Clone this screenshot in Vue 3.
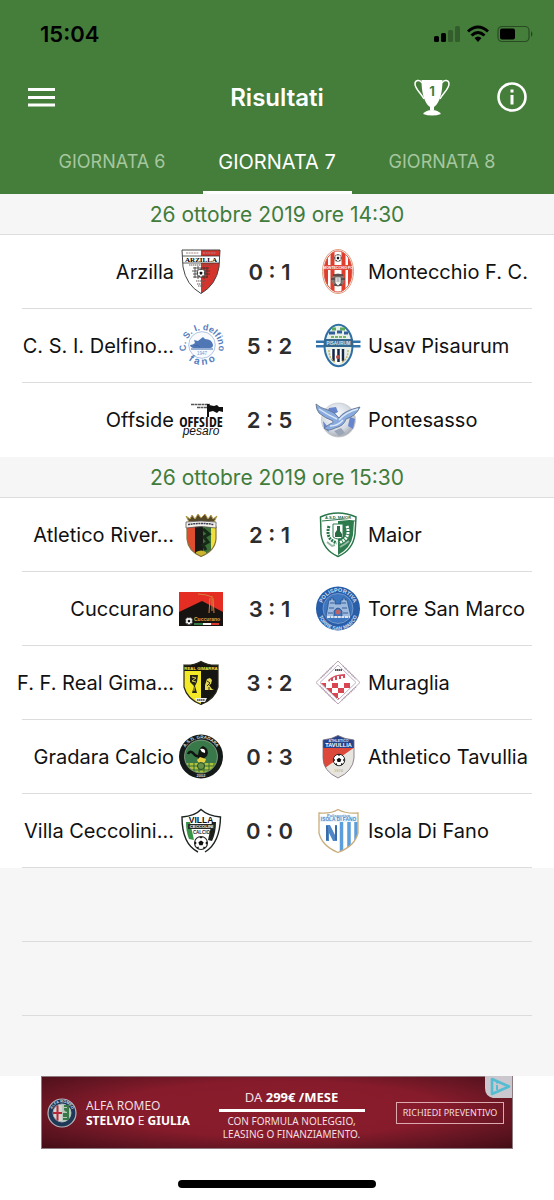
<script setup>
import { ref } from 'vue'

const days = [5, 6, 7, 8, 9]
const activeDay = ref(7)

const groups = [
  {
    date: '26 ottobre 2019 ore 14:30',
    matches: [
      { home: 'Arzilla', homeCrest: 'arzilla', score: '0 : 1', away: 'Montecchio F. C.', awayCrest: 'montecchio' },
      { home: 'C. S. I. Delfino...', homeCrest: 'delfino', score: '5 : 2', away: 'Usav Pisaurum', awayCrest: 'usav' },
      { home: 'Offside', homeCrest: 'offside', score: '2 : 5', away: 'Pontesasso', awayCrest: 'pontesasso' },
    ],
  },
  {
    date: '26 ottobre 2019 ore 15:30',
    matches: [
      { home: 'Atletico River...', homeCrest: 'atletico', score: '2 : 1', away: 'Maior', awayCrest: 'maior' },
      { home: 'Cuccurano', homeCrest: 'cuccurano', score: '3 : 1', away: 'Torre San Marco', awayCrest: 'torre' },
      { home: 'F. F. Real Gima...', homeCrest: 'gimarra', score: '3 : 2', away: 'Muraglia', awayCrest: 'muraglia' },
      { home: 'Gradara Calcio', homeCrest: 'gradara', score: '0 : 3', away: 'Athletico Tavullia', awayCrest: 'tavullia' },
      { home: 'Villa Ceccolini...', homeCrest: 'villa', score: '0 : 0', away: 'Isola Di Fano', awayCrest: 'isola' },
    ],
  },
]
</script>

<template>
  <svg class="sprites" aria-hidden="true">
    <defs>
      <clipPath id="shield-arzilla"><path d="M4 1H42L41 18Q38 36 23 44.500Q8 36 5 18Z" /></clipPath>
      <clipPath id="oval-montecchio"><ellipse cx="23" cy="22.500" rx="14" ry="20.500" /></clipPath>
      <clipPath id="shield-atletico"><path d="M9 15Q23 9 38 15V27Q37 39 23 44.500Q10 39 9 27Z" /></clipPath>
      <clipPath id="shield-gimarra"><path d="M6 5Q15 6 23 1.500Q31 6 40 5V27Q37 39 23 44.500Q9 39 6 27Z" /></clipPath>
      <clipPath id="diamond-muraglia"><path d="M23 5L41 22.500L23 40L5 22.500Z" /></clipPath>
      <clipPath id="disc-gradara"><circle cx="23" cy="22.500" r="16" /></clipPath>
      <clipPath id="shield-tavullia"><path d="M8 6Q17 5 23 1.500Q29 5 39 6V24Q38 37 23 44Q8 37 8 24Z" /></clipPath>
      <clipPath id="shield-isola"><path d="M4 5Q16 6 23 1.500Q31 6 43 5V25Q40 38 23 44.500Q7 38 4 25Z" /></clipPath>
      <radialGradient id="ball-shade" cx="42%" cy="38%" r="62%">
        <stop offset="0" stop-color="#fff" /><stop offset=".7" stop-color="#d4dae3" /><stop offset="1" stop-color="#a9adb5" />
      </radialGradient>
      <path id="arc-delfino-top" d="M8.500 28.500A16.500 16.500 0 1 1 40 28.500" />
      <path id="arc-delfino-bottom" d="M6 32A21.500 21.500 0 0 0 42 32" />
      <path id="arc-torre-top" d="M6.500 22.500A16.500 16.500 0 0 1 39.500 22.500" />
      <path id="arc-torre-bottom" d="M3 24A20 20 0 0 0 43 24" />
      <path id="arc-gradara" d="M5 22.500A18 18 0 0 1 41 22.500" />

      <g id="football">
        <circle r="5" fill="#fff" stroke="#222" stroke-width=".8" />
        <path d="M0 -2L2 -.500L1.200 1.800H-1.200L-2 -.500ZM-1.500 -4.700H1.500L0 -3.500ZM4.700 -1.500L4.700 1.500L3.300 0ZM-4.700 -1.500L-4.700 1.500L-3.300 0ZM1.500 4.700L3.500 3.500L2 2.700ZM-1.500 4.700L-3.500 3.500L-2 2.700Z" fill="#111" />
      </g>

      <symbol id="arzilla" viewBox="0 0 46 46">
        <g clip-path="url(#shield-arzilla)">
          <rect width="46" height="46" fill="#fff" />
          <path d="M23 0H46V46H23Z" fill="#d5342c" />
          <path d="M3 7H43V14H3Z" fill="#fff" stroke="#333" stroke-width=".8" />
        </g>
        <path d="M4 1H42L41 18Q38 36 23 44.500Q8 36 5 18Z" fill="none" stroke="#444" stroke-width="1" />
        <path d="M8 4H21M25 4H38" stroke="#a88" stroke-width="1.200" stroke-dasharray="2 .6" />
        <text x="23" y="13" font-size="7" text-anchor="middle" font-family="Liberation Serif, serif">ARZILLA</text>
        <path d="M15 19H31M14 22H32M15 25H32M15 28H30M17 18V29M20 17V30M26 18V30M29 18V29" stroke="#333" stroke-width=".8" />
        <use href="#football" transform="translate(23 24) scale(.8)" />
        <path d="M11 16H35M18 32H28M19 35H27M20 37H26" stroke="#665757" stroke-width="1.200" stroke-dasharray="1.500 .5" />
      </symbol>

      <symbol id="montecchio" viewBox="0 0 46 46">
        <ellipse cx="23" cy="22.500" rx="15.500" ry="22" fill="#fff" stroke="#dda082" stroke-width="1" />
        <g clip-path="url(#oval-montecchio)">
          <path d="M11 0V46M17.500 0V46M28.500 0V46M35 0V46" stroke="#df3e2d" stroke-width="4" />
          <path d="M8 16H38V21H8Z" fill="#e04a39" />
        </g>
        <ellipse cx="23" cy="22.500" rx="14" ry="20.500" fill="none" stroke="#df5946" stroke-width="1" />
        <use href="#football" transform="translate(23 9) scale(.7)" />
        <text x="23" y="20" font-size="3.500" fill="#fff" text-anchor="middle">MONTECCHIO FC</text>
        <circle cx="23" cy="31" r="6.500" fill="#8b7770" />
        <path d="M16 30H30M18 26H28M19 36H27" stroke="#4d4140" stroke-width="1.500" />
        <path d="M20 28H26V34L23 37L20 34Z" fill="#eee" stroke="#555" stroke-width=".7" />
        <path d="M21.500 30H24.500M21.500 32H24.500" stroke="#666" stroke-width=".7" />
      </symbol>

      <symbol id="delfino" viewBox="0 0 46 46">
        <circle cx="24" cy="22" r="13.300" fill="#f8fafe" stroke="#a9bede" stroke-width=".9" />
        <path d="M12 22Q15 22 17 20L16 17L20 18L25 14L27 16Q34 16 35 22Q35 25 32 25H15Q12 24 12 22Z" fill="#4f77b6" />
        <path d="M13 26H35M16 23Q20 21 22 24" stroke="#3d69ad" stroke-width="1" fill="none" />
        <text x="24" y="32" font-size="4.500" font-weight="400" fill="#7894bd" text-anchor="middle">1947</text>
        <text font-size="9" fill="#557ebe" text-anchor="middle"><textPath href="#arc-delfino-top" startOffset="50%">C. S. I. delfino</textPath></text>
        <text font-size="10" fill="#557ebe" text-anchor="middle"><textPath href="#arc-delfino-bottom" startOffset="50%">f a n o</textPath></text>
      </symbol>

      <symbol id="usav" viewBox="0 0 46 46">
        <path d="M1 17.500H45.500V20H1ZM1 22H45.500V24.500H1Z" fill="#3173ad" />
        <ellipse cx="23.500" cy="22.500" rx="14" ry="20.700" fill="#e6f0e9" stroke="#306fa5" stroke-width="2" />
        <path d="M17 6H21M25 6H30" stroke="#5ca85d" stroke-width="3" />
        <path d="M14 10H20M22 9H27M29 10H33" stroke="#335e9a" stroke-width="3" />
        <path d="M16 14H31" stroke="#76b765" stroke-width="2" stroke-dasharray="3 1" />
        <path d="M9 16H38V24H9Z" fill="#35678f" />
        <text x="23.500" y="21.700" font-size="4.500" text-anchor="middle" fill="#d8edf5">PISAURUM</text>
        <path d="M16 27H30V37Q26 40 23 41Q19 40 16 37Z" fill="#fff" />
        <path d="M18.500 26V38M23.500 26V39M28 26V38" stroke="#172748" stroke-width="2.500" />
        <path d="M14 27Q14 36 20 39M33 27Q33 36 27 39" fill="none" stroke="#c5b36b" stroke-width="1.500" stroke-dasharray="2 1" />
        <circle cx="23" cy="34" r="2" fill="#b45148" />
      </symbol>

      <symbol id="offside" viewBox="0 0 46 46">
        <path d="M13 7.500H32M19 10.500H31" stroke="#555" stroke-width="1.500" stroke-dasharray="3 .5" />
        <path d="M29 7H31V20H29ZM31 8L36 9L39 8L41 10H45V15L41 14L39 16L35 14L31 15Z" fill="#111" />
        <text x="23" y="30" font-size="14" text-anchor="middle" font-family="Liberation Sans Narrow, Open Sans Condensed, Roboto Condensed, Liberation Sans" fill="#111">OFFSIDE</text>
        <text x="23" y="38" font-size="12" font-style="italic" font-weight="400" text-anchor="middle" fill="#111">pesaro</text>
      </symbol>

      <symbol id="pontesasso" viewBox="0 0 46 46">
        <circle cx="23.500" cy="23" r="17" fill="url(#ball-shade)" stroke="#c8c9ca" stroke-width=".8" />
        <path d="M14 11L21 10L23 15L17 18L12 15ZM35 20L40 22L38 32L33 29ZM8 24L12 29L14 35L9 31Z" fill="#6685cc" />
        <path d="M19 34L26 31L30 36L24 39Z" fill="#9ba5b8" />
        <path d="M1 7Q5 11 13 13Q20 15 24 21Q28 14 45 10Q41 19 31 22Q29 29 20 31Q13 35 9 31L15 27Q19 26 18 24Q10 21 4 16Q1 12 1 7Z" fill="#88aade" stroke="#627590" stroke-width=".9" />
        <path d="M4 12Q13 18 22 22M24 23Q31 15 43 12M15 29Q23 29 28 23" stroke="#dce8f8" stroke-width="1.400" fill="none" />
      </symbol>

      <symbol id="atletico" viewBox="0 0 46 46">
        <path d="M8 4L12 7L14 3L17 7L20 2L23 6L27 2L30 7L33 3L35 7L39 4L36 10H11Z" fill="#544829" stroke="#b59c4b" stroke-width="1" />
        <g clip-path="url(#shield-atletico)">
          <path d="M8 8H17V46H8Z" fill="#df4d2f" /><path d="M17 8H25V46H17Z" fill="#181a18" /><path d="M25 8H33V46H25Z" fill="#3b7137" /><path d="M33 8H40V46H33Z" fill="#efdf3d" />
          <path d="M25 17L31 22L26 25L30 30L25 33L28 38" fill="none" stroke="#172a18" stroke-width="3" />
          <path d="M18 40Q23 37 28 40V46H18Z" fill="#cab62d" />
        </g>
        <path d="M9 15Q23 9 38 15V27Q37 39 23 44.500Q10 39 9 27Z" fill="none" stroke="#86713b" stroke-width="1.200" />
        <path d="M8 10Q23 8 38 10V16Q23 13 8 16Z" fill="#f4f2e8" stroke="#5b595d" stroke-width=".8" />
        <path d="M10 12.500Q23 10.500 36 12.500" fill="none" stroke="#3c3d59" stroke-width="1.500" stroke-dasharray="2 .6" />
      </symbol>

      <symbol id="maior" viewBox="0 0 46 46">
        <path d="M5.500 5Q14 1 23 1Q32 1 41 5L40 22Q38 38 23 44.500Q8 38 6 22Z" fill="#fff" stroke="#2b774a" stroke-width="1.500" />
        <path d="M23 9H39L38 23Q36 36 23 43Z" fill="#2e7c4d" />
        <path d="M7 9Q23 6 40 9" fill="none" stroke="#2b774a" stroke-width="1" />
        <text x="23" y="6.500" font-size="4" text-anchor="middle" fill="#226b40">A.S.D. MAIOR</text>
        <path d="M18 12H28V25Q23 29 18 25Z" fill="#fff" stroke="#2e7c4d" stroke-width="1" />
        <path d="M20 25V21L22 18V14H25V19L27 22V25Z" fill="#286c43" />
        <path d="M14 14Q10 27 22 31" fill="none" stroke="#27754b" stroke-width="3" stroke-dasharray="2 1" />
        <path d="M32 14Q36 26 24 31" fill="none" stroke="#fff" stroke-width="3" stroke-dasharray="2 1" />
        <path d="M12 30L17 34L20 33M25 35L30 32L34 29" fill="none" stroke="#95b9a4" stroke-width="2" />
      </symbol>

      <symbol id="cuccurano" viewBox="0 0 46 46">
        <path d="M1 6H45V40H1Z" fill="#e42e23" />
        <path d="M1 26L24 15L45 26V40H1Z" fill="#171311" />
        <path d="M20 8Q28 8 34 11M34 10V25M32 12L31 27M35 12L36 27" stroke="#d6803a" stroke-width="1" fill="none" />
        <use href="#football" transform="translate(11 35) scale(.75)" />
        <text x="16" y="35" font-size="5" fill="#e5a743">Cuccurano</text>
        <path d="M16 37H25V39H16Z" fill="#317d45" /><path d="M25 37H33V39H25Z" fill="#fff" /><path d="M33 37H41V39H33Z" fill="#dc3830" />
      </symbol>

      <symbol id="torre" viewBox="0 0 46 46">
        <circle cx="23" cy="22.500" r="22" fill="#285da8" />
        <circle cx="23" cy="22.500" r="15" fill="#3d75bf" stroke="#8caad2" stroke-width=".7" />
        <text font-size="5.500" fill="#d4e2f4" text-anchor="middle"><textPath href="#arc-torre-top" startOffset="50%">POLISPORTIVA</textPath></text>
        <text font-size="5" fill="#d4e2f4" text-anchor="middle"><textPath href="#arc-torre-bottom" startOffset="50%">TORRE SAN MARCO</textPath></text>
        <path d="M11 31L14 14H16V12H18V14H20V18H26V14H28V12H30V14H32L36 31H27V25Q23 19 19 25V31Z" fill="#9db9dd" stroke="#244d8a" stroke-width=".7" />
        <path d="M15 17H19M27 17H31M14 22H19M27 22H32M13 27H18M28 27H33" stroke="#345e98" stroke-width="1" />
        <circle cx="23" cy="26" r="2.500" fill="#bd6467" />
        <path d="M12 31H35" stroke="#dce6f2" stroke-width="2" stroke-dasharray="3 .6" />
      </symbol>

      <symbol id="gimarra" viewBox="0 0 46 46">
        <g clip-path="url(#shield-gimarra)">
          <path d="M0 0H23V46H0Z" fill="#f4e927" /><path d="M23 0H46V46H23ZM5 0H41V11H5Z" fill="#151512" />
        </g>
        <path d="M6 5Q15 6 23 1.500Q31 6 40 5V27Q37 39 23 44.500Q9 39 6 27Z" fill="none" stroke="#28271b" stroke-width="1.200" />
        <text x="23" y="10" font-size="4.300" text-anchor="middle" fill="#f4e845">REAL GIMARRA</text>
        <path d="M12 15H20L19 22L17 26L19 33H14L16 26L12 22Z" fill="#26251b" />
        <path d="M14 17L18 18L14 21L18 22M16 27V31" stroke="#d9cc43" stroke-width="1" fill="none" />
        <path d="M27 29V25L29 19L32 18L34 20L33 24L31 25L34 29L36 30H27Z" fill="#e5d751" />
        <path d="M29 21L32 23L29 26M31 27V30" stroke="#343011" stroke-width="1" fill="none" />
        <path d="M17 38H29L27 42H19Z" fill="#eee" />
        <path d="M19 40H27" stroke="#444" stroke-width="1.500" stroke-dasharray="1.500 .4" />
      </symbol>

      <symbol id="muraglia" viewBox="0 0 46 46">
        <path d="M23 1L45 22.500L23 44L1 22.500Z" fill="#fff" stroke="#bba8b4" stroke-width="1" />
        <g clip-path="url(#diamond-muraglia)" fill="#d94551">
          <path d="M5 23H11V28H5ZM17 23H23V28H17ZM29 23H35V28H29ZM11 28H17V33H11ZM23 28H29V33H23ZM35 28H41V33H35ZM17 33H23V38H17ZM29 33H35V38H29ZM23 38H29V43H23Z" />
        </g>
        <path d="M23 5L41 22.500L23 40L5 22.500Z" fill="none" stroke="#bcb4c4" stroke-width="1" />
        <path d="M13 20Q19 14 30 14V18H28V16H26V19H24V16H22V20H20V17L18 18V21H16V19L14 22Z" fill="#d44c5b" />
        <path d="M20 10H27" stroke="#555" stroke-width="2" stroke-dasharray="1.500 .4" />
        <path d="M6 18L18 6M28 6L41 19M5 26L20 41M27 40L41 27" stroke="#a995aa" stroke-width="1.500" stroke-dasharray="1 1" />
      </symbol>

      <symbol id="gradara" viewBox="0 0 46 46">
        <circle cx="23" cy="22.500" r="22" fill="#141a17" />
        <circle cx="23" cy="22.500" r="16.500" fill="#397849" stroke="#b9c9b6" stroke-width=".6" />
        <g clip-path="url(#disc-gradara)">
          <path d="M6 29H40V41H6Z" fill="#afc13c" />
          <path d="M6 32H40M6 36H40M11 29V40M16 29V40M21 29V40M26 29V40M31 29V40M36 29V40" stroke="#316b36" stroke-width="1" />
        </g>
        <text font-size="4.500" fill="#dbded9" text-anchor="middle"><textPath href="#arc-gradara" startOffset="50%">A.S.D. GRADARA</textPath></text>
        <path d="M10 20Q12 16 15 19Q18 23 21 22" fill="none" stroke="#101512" stroke-width="2.500" />
        <path d="M20 23Q20 14 25 12Q32 15 29 22L25 25H20Z" fill="#101512" />
        <path d="M22 15Q28 14 27 19L24 18Z" fill="#fff" />
        <path d="M19 26L22 23L28 25L27 28Q23 31 20 28Z" fill="#e5cf42" />
        <circle cx="23" cy="32" r="3.500" fill="#689247" stroke="#234d29" />
        <text x="23" y="43" font-size="4" fill="#ddd" text-anchor="middle">2002</text>
      </symbol>

      <symbol id="tavullia" viewBox="0 0 46 46">
        <g clip-path="url(#shield-tavullia)">
          <path d="M0 0H46V46H0Z" fill="#e7e5df" /><path d="M7 13H40L7 36Z" fill="#dc4839" /><path d="M7 0H40V14H7Z" fill="#26428a" />
        </g>
        <path d="M8 6Q17 5 23 1.500Q29 5 39 6V24Q38 37 23 44Q8 37 8 24Z" fill="none" stroke="#756a79" stroke-width=".8" />
        <text x="23.500" y="7.700" font-size="3.500" text-anchor="middle" fill="#dbe5fa">ATHLETICO</text>
        <text x="23.500" y="12.500" font-size="5.500" text-anchor="middle" fill="#fff">TAVULLIA</text>
        <use href="#football" transform="translate(24 26) scale(1.150)" />
        <text x="23.500" y="38" font-size="4" text-anchor="middle" fill="#c8b99a">1974</text>
      </symbol>

      <symbol id="villa" viewBox="0 0 46 46">
        <path d="M20 44Q4 36 4 9Q17 8 23 1.500Q30 8 42.500 9Q42 35 27 44" fill="#fff" stroke="#1c2420" stroke-width="1.400" />
        <path d="M8 14H12L16 32L11 31Q8 24 8 14Z" fill="#379345" /><path d="M34 14H38Q38 25 34 33L30 32Z" fill="#1c211e" />
        <text x="23" y="15" font-size="8.500" text-anchor="middle" fill="#111">VILLA</text>
        <path d="M10 16H37V21H10Z" fill="#252c28" />
        <text x="23.500" y="20" font-size="4.300" text-anchor="middle" fill="#fff">CECCOLINI</text>
        <text x="23.500" y="25.500" font-size="4.500" text-anchor="middle" fill="#222">CALCIO</text>
        <circle cx="23" cy="35" r="7.500" fill="#fff" />
        <use href="#football" transform="translate(23 35) scale(1.300)" />
      </symbol>

      <symbol id="isola" viewBox="0 0 46 46">
        <g clip-path="url(#shield-isola)">
          <path d="M0 0H46V46H0Z" fill="#fff" /><path d="M26.500 14V46M34 14V46M41 14V40" stroke="#5b9edb" stroke-width="3.500" />
          <path d="M3 8H44V14H3Z" fill="#e9f3fb" />
        </g>
        <path d="M4 5Q16 6 23 1.500Q31 6 43 5V25Q40 38 23 44.500Q7 38 4 25Z" fill="none" stroke="#c9ae7e" stroke-width="1.300" />
        <text x="23.500" y="8.500" font-size="4" text-anchor="middle" fill="#5b8dc2">Polisportiva</text>
        <text x="23.500" y="13" font-size="4.800" text-anchor="middle" fill="#4886c6">ISOLA DI FANO</text>
        <path d="M11 17H15L20 27V17H22V33H18L14 25V33H11Z" fill="#4f86c3" />
        <path d="M12 18V32M21 18V32" stroke="#34669f" stroke-width="1.500" />
      </symbol>
    </defs>
  </svg>

  <div class="app">
    <header class="top">
      <div class="status">
        <time>15:04</time>
        <svg width="100" height="18" viewBox="0 0 100 18" aria-label="Stato del telefono">
          <rect x="0" y="11" width="5" height="6" rx="1.500" /><rect x="7" y="8" width="5" height="9" rx="1.500" />
          <g opacity=".25"><rect x="14" y="5" width="5" height="12" rx="1.500" /><rect x="21" y="1" width="5" height="16" rx="1.500" /></g>
          <g fill="none" stroke="#000" stroke-width="3"><path d="M34 6.500Q44 -2.500 54 6.500" /><path d="M37.500 10.500Q44 4.500 50.500 10.500" /></g>
          <path d="M40.500 13Q44 9.800 47.500 13L44 17Z" />
          <rect x="64" y="1.500" width="31" height="15" rx="4" fill="none" stroke="#000" stroke-opacity=".4" stroke-width="1.200" />
          <rect x="66" y="3.500" width="15" height="11" rx="2" /><path d="M97 6Q100 9 97 12Z" opacity=".45" />
        </svg>
      </div>
      <div class="bar">
        <button class="icon" aria-label="Menu">
          <svg width="28" height="19" viewBox="0 0 28 19"><path d="M1 1.500H28M1 9.500H28M1 17H28" stroke="#fff" stroke-width="2.800" /></svg>
        </button>
        <h1>Risultati</h1>
        <div class="actions">
          <button class="icon" aria-label="Classifica">
            <svg width="36" height="37" viewBox="0 0 36 37">
              <path d="M7.500 1H28.500C28.500 13 26 24 20 28V31H16V28C10 24 7.500 13 7.500 1Z" fill="#fff" />
              <path d="M8 4C6 0 1 1 1 5C1 10 7 14 10 20M28 4C30 0 35 1 35 5C35 10 29 14 26 20" fill="none" stroke="#fff" stroke-width="1.500" />
              <path d="M9 35Q12 31 18 31Q24 31 27 35Q18 38 9 35Z" fill="#fff" />
              <text x="18" y="17" text-anchor="middle" font-family="Inter, sans-serif" font-size="13" font-weight="700" fill="#457d3b">1</text>
            </svg>
          </button>
          <button class="icon" aria-label="Informazioni">
            <svg width="30" height="30" viewBox="0 0 30 30"><circle cx="15" cy="15" r="13.500" fill="none" stroke="#fff" stroke-width="2.600" /><path d="M13.500 7.500H16.500V10.500H13.500ZM13.500 13H16.500V22.500H13.500Z" fill="#fff" /></svg>
          </button>
        </div>
      </div>
      <nav class="tabs" aria-label="Giornate">
        <button v-for="d in days" :key="d" class="tab" :class="{ active: d === activeDay }" @click="activeDay = d">GIORNATA {{ d }}</button>
      </nav>
    </header>

    <main class="results">
      <section v-for="g in groups" :key="g.date">
        <h2>{{ g.date }}</h2>
        <ul>
          <li v-for="m in g.matches" :key="m.home">
            <span class="home">{{ m.home }}</span>
            <svg class="crest" aria-hidden="true"><use :href="'#' + m.homeCrest" /></svg>
            <strong>{{ m.score }}</strong>
            <svg class="crest" aria-hidden="true"><use :href="'#' + m.awayCrest" /></svg>
            <span class="away">{{ m.away }}</span>
          </li>
        </ul>
      </section>
      <div class="blank"></div>
      <div class="blank"></div>
    </main>

    <footer class="bottom">
      <a class="ad" href="#">
        <svg class="alfa" width="30" height="30" viewBox="0 0 30 30" aria-hidden="true">
          <defs><path id="arc-alfa" d="M4.500 15A10.500 10.500 0 0 1 25.500 15" /></defs>
          <circle cx="15" cy="15" r="14" fill="#1e3857" stroke="#b7b7bd" stroke-width="1.200" />
          <text font-family="Liberation Sans, sans-serif" font-weight="700" font-size="3.800" fill="#dedfe4" text-anchor="middle"><textPath href="#arc-alfa" startOffset="50%">ALFA ROMEO</textPath></text>
          <circle cx="15" cy="15" r="9" fill="#d5d5d1" stroke="#a9acb5" />
          <path d="M15 6A9 9 0 0 1 15 24Z" fill="#b8c7bd" />
          <path d="M10.500 7.500V22.500M6 15H15" stroke="#b52939" stroke-width="2" />
          <path d="M17 8H21V11H18Q18 13 21 13V16H17V18H21V21H16" fill="none" stroke="#397947" stroke-width="2" />
        </svg>
        <span class="brand">ALFA ROMEO<br /><b>STELVIO</b> E <b>GIULIA</b></span>
        <span class="offer">
          <span class="price">DA <b>299€ /MESE</b></span>
          <span class="terms">CON FORMULA NOLEGGIO,<br />LEASING O FINANZIAMENTO.</span>
        </span>
        <span class="cta">RICHIEDI PREVENTIVO</span>
        <svg class="choices" width="27" height="22" viewBox="0 0 27 22" aria-label="Scegli tu!">
          <path d="M0 0H27V22H8Q0 20 0 12Z" fill="#cbc7ce" />
          <path d="M7 3V18L24 10.500Z" fill="none" stroke="#55bdd2" stroke-width="2.600" stroke-linejoin="round" />
          <path d="M12 6V7.500M12 9V14" stroke="#55bdd2" stroke-width="2" />
        </svg>
      </a>
      <div class="home-bar"></div>
    </footer>
  </div>
</template>

<style>
body {
  background: #fff;
}
</style>

<style scoped>
.sprites {
  position: absolute;
  width: 0;
  height: 0;
}
.app {
  min-height: 100vh;
  overflow: hidden;
  font-family: Inter, "Liberation Sans", sans-serif;
  color: #111;
}
button {
  border: 0;
  padding: 0;
  background: none;
  color: inherit;
  font: inherit;
}
.top {
  background: #457d3b;
  color: #fff;
}
.status {
  display: flex;
  justify-content: space-between;
  align-items: center;
  height: 68px;
  padding: 0 20px 0 40px;
  color: #000;
}
.status time {
  font-size: 22px;
  font-weight: 600;
}
.bar {
  display: grid;
  grid-template-columns: 1fr auto 1fr;
  align-items: center;
  height: 58px;
  padding: 0 27px;
}
.icon {
  display: flex;
  justify-self: start;
}
h1 {
  margin: 0;
  font-size: 24px;
  font-weight: 600;
}
.actions {
  display: flex;
  justify-content: flex-end;
  align-items: center;
  gap: 47px;
}
.tabs {
  display: flex;
  justify-content: center;
  height: 68px;
  overflow: hidden;
}
.tab {
  flex: 0 0 149px;
  margin: 0 8px;
  padding-top: 6px;
  border-bottom: 3px solid transparent;
  font-size: 18px;
  color: #a6c79f;
  white-space: nowrap;
}
.tab.active {
  border-color: #fff;
  font-size: 20px;
  color: #fff;
}
.results {
  padding-bottom: 60px;
  background: #f6f6f6;
}
h2 {
  margin: 0;
  padding-top: 2px;
  border-bottom: 1px solid #dedede;
  font-size: 21px;
  line-height: 38px;
  font-weight: 400;
  text-align: center;
  color: #417c3b;
}
ul {
  margin: 0;
  padding: 0;
  list-style: none;
  background: #fff;
}
li {
  display: grid;
  grid-template-columns: 174fr 54px 83px 57px 186fr;
  align-items: center;
  height: 74px;
  background: linear-gradient(#dcdcdc, #dcdcdc) center bottom / calc(100% - 44px) 1px no-repeat;
  font-size: 20px;
  white-space: nowrap;
}
section:first-child li:last-child {
  background: none;
}
.home,
.away {
  min-width: 0;
}
.home {
  display: flex;
  justify-content: flex-end;
}
.crest {
  width: 46px;
  height: 46px;
  margin-left: 4px;
  font-family: "Liberation Sans", sans-serif;
  font-weight: 700;
}
strong {
  font-size: 22px;
  font-weight: 600;
  text-align: center;
  color: #2d2d2d;
}
.blank {
  height: 73px;
  margin: 0 22px;
  border-bottom: 1px solid #dcdcdc;
}
.bottom {
  background: #fff;
}
.ad {
  position: relative;
  display: grid;
  grid-template-columns: 30px 110px 1fr 108px;
  align-items: center;
  height: 71px;
  margin: 0 41px;
  padding: 0 8px 0 5px;
  border: 1px solid #8d7b80;
  background: radial-gradient(ellipse at 50% 45%, #8b1d2b 0, #861b2b 50%, #5d1420 80%, #32080f 115%);
  color: #f1dfe0;
  font-family: "Noto Sans", sans-serif;
  text-decoration: none;
  white-space: nowrap;
}
.brand {
  padding-left: 9px;
  font-size: 12px;
  line-height: 15px;
}
.ad b {
  color: #fff;
}
.offer {
  display: flex;
  flex-direction: column;
  align-items: center;
}
.price {
  width: 146px;
  border-bottom: 3px solid #fff;
  font-size: 13px;
  line-height: 24px;
  text-align: center;
}
.terms {
  padding-top: 3px;
  font-size: 10px;
  line-height: 13px;
  text-align: center;
}
.cta {
  border: 1px solid #dba9af;
  font-size: 9px;
  line-height: 20px;
  text-align: center;
}
.choices {
  position: absolute;
  top: -1px;
  right: 0;
}
.home-bar {
  width: 198px;
  height: 8px;
  margin: 31px auto 12px;
  border-radius: 4px;
  background: #000;
}
</style>
